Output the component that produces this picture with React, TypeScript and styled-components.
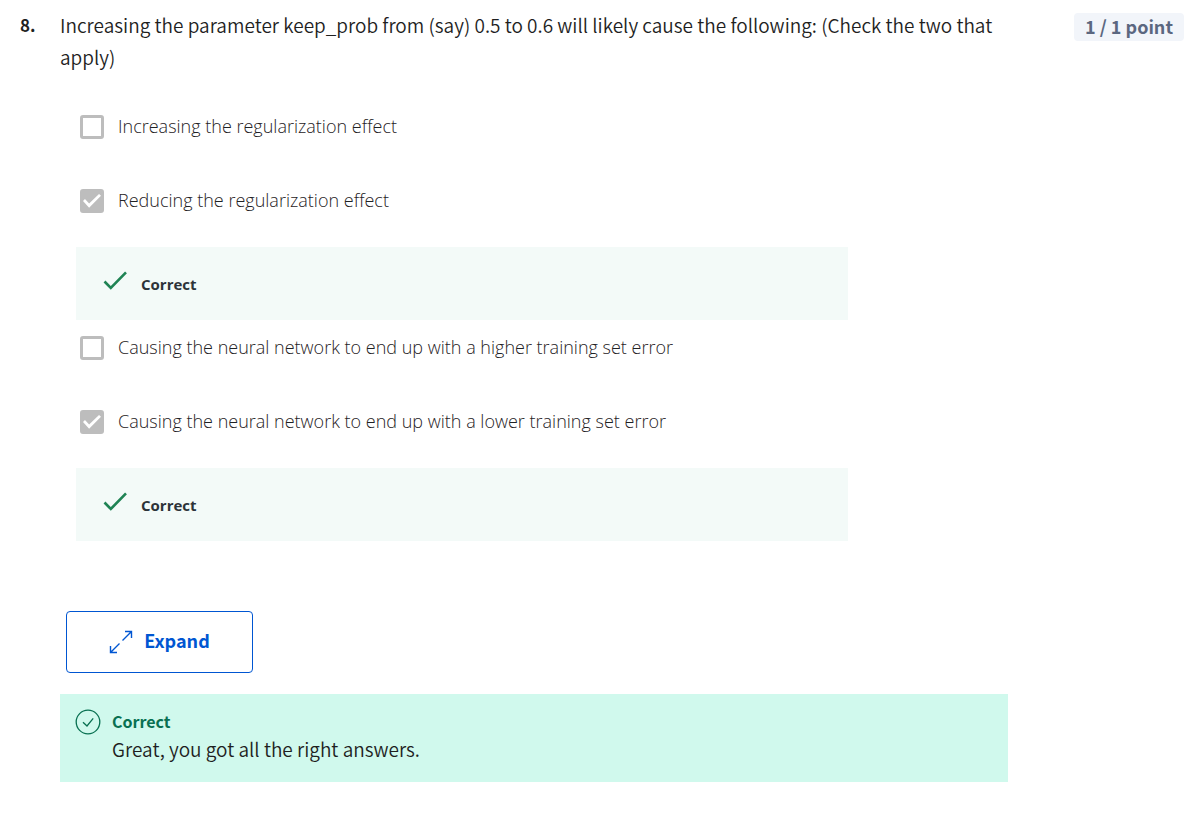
import React from "react";
import styled, { createGlobalStyle } from "styled-components";

const GlobalStyle = createGlobalStyle`
  *, *::before, *::after { box-sizing: border-box; }
  body {
    margin: 0;
    background: #ffffff;
    color: #1f1f1f;
    font-family: "Noto Sans CJK SC", "Source Sans Pro", sans-serif;
  }
`;

const Question = styled.main`
  display: grid;
  grid-template-columns: 40px minmax(0, 1fr) auto;
  align-items: start;
  padding: 9px 16px 32px 20px;
`;

const Number = styled.span`
  font-size: 17px;
  line-height: 32px;
  font-weight: 700;
`;

const Content = styled.div`
  margin-right: 66px;
`;

const Prompt = styled.h1`
  margin: 0;
  font-size: 19px;
  line-height: 32px;
  font-weight: 350;
`;

const Points = styled.span`
  margin-top: 4px;
  padding: 0 11px 2px;
  border-radius: 4px;
  background: #f2f5fa;
  color: #5b6780;
  font-size: 18px;
  line-height: 26px;
  font-weight: 700;
  white-space: nowrap;
`;

const Options = styled.fieldset`
  display: flex;
  flex-direction: column;
  margin: 42px 0 0;
  padding: 0 0 0 16px;
  border: 0;
  min-width: 0;
`;

const OptionItem = styled.div<{ $answered?: boolean }>`
  margin-bottom: ${(p) => (p.$answered ? "16px" : "50px")};

  &:last-child {
    margin-bottom: 0;
  }
`;

const OptionLabel = styled.label`
  display: flex;
  align-items: center;
  gap: 14px;
  padding-left: 4px;
  color: #1f2225;
  font-family: "Open Sans", sans-serif;
  font-size: 18px;
  line-height: 22px;
  font-weight: 350;
`;

const OptionText = styled.span`
  padding-bottom: 2px;
`;

const Checkbox = styled.input`
  appearance: none;
  flex: none;
  display: grid;
  place-items: center;
  width: 24px;
  height: 24px;
  margin: 0;
  border: 3px solid #bdbdbd;
  border-radius: 3px;
  background: #ffffff;

  &:checked {
    background: #bdbdbd;
  }

  &:checked::before {
    content: "";
    width: 18px;
    height: 14px;
    background: #ffffff;
    clip-path: polygon(0 50%, 11% 36%, 34% 67%, 89% 0, 100% 13%, 34% 98%);
  }
`;

const Feedback = styled.div`
  display: flex;
  align-items: center;
  gap: 14px;
  max-width: 772px;
  height: 73px;
  margin-top: 34px;
  padding-left: 27px;
  background: #f3faf8;
  color: #2d3339;
  font-family: "Open Sans", sans-serif;
  font-size: 15px;
  font-weight: 700;

  svg {
    margin-bottom: 6px;
  }
`;

const ExpandButton = styled.button`
  display: flex;
  align-items: center;
  justify-content: center;
  gap: 11px;
  width: 187px;
  height: 62px;
  margin: 70px 0 21px 6px;
  padding: 0;
  border: 1px solid #0056d2;
  border-radius: 4px;
  background: #ffffff;
  color: #0056d2;
  font-family: inherit;
  font-size: 18px;
  line-height: 28px;
  font-weight: 700;
`;

const ExpandText = styled.span`
  padding-bottom: 4px;
`;

const Result = styled.section`
  display: flex;
  align-items: flex-start;
  gap: 12px;
  padding: 13px 16px 19px;
  background: #d0f9ed;

  svg {
    flex: none;
    margin-top: 3px;
  }
`;

const ResultTitle = styled.h2`
  margin: 0;
  color: #087051;
  font-size: 16px;
  line-height: 28px;
  font-weight: 700;
`;

const ResultText = styled.p`
  margin: 0;
  font-size: 19px;
  line-height: 28px;
  font-weight: 350;
`;

const CheckIcon = () => (
  <svg width="24" height="20" viewBox="0 0 24 20" fill="none" stroke="#1f8354" strokeWidth="2.6" aria-hidden="true">
    <path d="M1.5 10.5 7.8 17 23 1.3" />
  </svg>
);

const ExpandIcon = () => (
  <svg width="24" height="24" viewBox="0 0 24 24" fill="none" stroke="currentColor" strokeWidth="1.4" aria-hidden="true">
    <path d="M13.5 10.5 22.5 1.5M16 1.5h6.5V8M10.5 13.5l-9 9M1.5 16v6.5H8" />
  </svg>
);

const CircleCheckIcon = () => (
  <svg width="24" height="24" viewBox="0 0 24 24" fill="none" stroke="#087051" strokeWidth="1.3" overflow="visible" aria-hidden="true">
    <circle cx="12" cy="12" r="11.8" />
    <path d="M7 12.2 11 16l6.2-7.6" />
  </svg>
);

const options = [
  { text: "Increasing the regularization effect", checked: false },
  { text: "Reducing the regularization effect", checked: true },
  { text: "Causing the neural network to end up with a higher training set error", checked: false },
  { text: "Causing the neural network to end up with a lower training set error", checked: true },
];

export default function App() {
  return (
    <>
      <GlobalStyle />
      <Question>
        <Number>8.</Number>
        <Content>
          <Prompt id="prompt">
            Increasing the parameter keep_prob from (say) 0.5 to 0.6 will likely cause the following: (Check the two
            that apply)
          </Prompt>
          <Options aria-labelledby="prompt">
            {options.map((option, i) => (
              <OptionItem key={option.text} $answered={option.checked}>
                <OptionLabel htmlFor={`option-${i}`}>
                  <Checkbox id={`option-${i}`} type="checkbox" checked={option.checked} readOnly />
                  <OptionText>{option.text}</OptionText>
                </OptionLabel>
                {option.checked && (
                  <Feedback>
                    <CheckIcon />
                    Correct
                  </Feedback>
                )}
              </OptionItem>
            ))}
          </Options>
          <ExpandButton type="button">
            <ExpandIcon />
            <ExpandText>Expand</ExpandText>
          </ExpandButton>
          <Result>
            <CircleCheckIcon />
            <div>
              <ResultTitle>Correct</ResultTitle>
              <ResultText>Great, you got all the right answers.</ResultText>
            </div>
          </Result>
        </Content>
        <Points>1 / 1 point</Points>
      </Question>
    </>
  );
}
